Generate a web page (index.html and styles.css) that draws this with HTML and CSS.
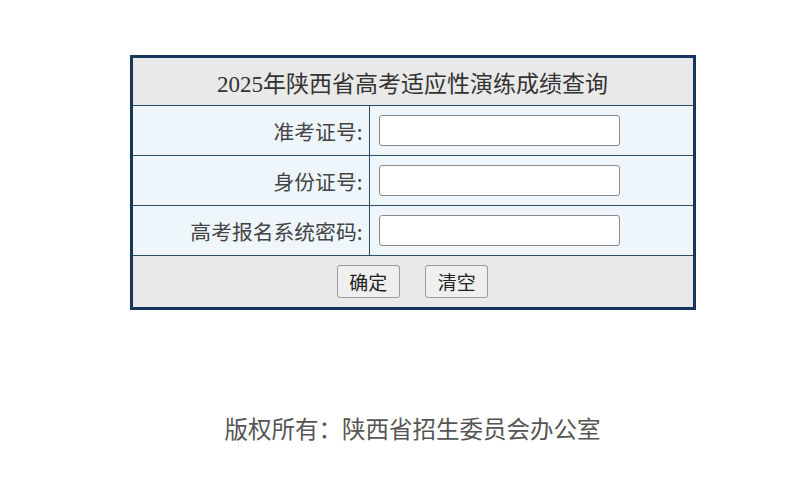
FILE: index.html
```html
<!DOCTYPE html>
<html lang="zh-CN">
<head>
    <meta charset="UTF-8">
    <title>2025年陕西省高考适应性演练成绩查询</title>
    <link rel="stylesheet" href="styles.css">
</head>
<body>
<div class="page">
    <form class="query-form" onsubmit="return false;">
        <table class="query-table">
            <tr class="head-row">
                <th colspan="2">2025年陕西省高考适应性演练成绩查询</th>
            </tr>
            <tr>
                <td class="label">准考证号:</td>
                <td class="field"><input type="text" name="ksh"></td>
            </tr>
            <tr>
                <td class="label">身份证号:</td>
                <td class="field"><input type="text" name="sfzh"></td>
            </tr>
            <tr>
                <td class="label">高考报名系统密码:</td>
                <td class="field"><input type="password" name="mm"></td>
            </tr>
            <tr class="btn-row">
                <td colspan="2">
                    <button type="submit">确定</button>
                    <button type="reset">清空</button>
                </td>
            </tr>
        </table>
    </form>

    <div class="footer">版权所有：陕西省招生委员会办公室</div>
</div>
</body>
</html>
```

FILE: styles.css
```css
* {
  box-sizing: border-box;
}

body {
  margin: 0;
  background: #fff;
  font-family: "Noto Sans CJK SC", "Noto Sans", sans-serif;
  color: #333;
}

.page {
  width: 825px;
  padding-top: 55px;
}

.query-table {
  margin: 0 auto;
  width: 566px;
  border-collapse: collapse;
  border: 3px solid #17365d;
}

.query-table th,
.query-table td {
  border: 1px solid #2b4b6b;
  padding: 0;
}

.head-row th {
  height: 49px;
  background: #e9e9e9;
  font-family: "Liberation Serif", "Noto Sans CJK SC", serif;
  font-size: 23px;
  font-weight: normal;
  color: #333;
  text-align: center;
}

.label {
  width: 238px;
  height: 50px;
  padding-right: 6px !important;
  background: #eef6fc;
  text-align: right;
  font-size: 20.8px;
  color: #444;
}

.field {
  background: #eef6fc;
  padding-left: 9px !important;
}

.field input {
  display: block;
  width: 241px;
  height: 31px;
  border: 1px solid #8a8a8a;
  border-radius: 3px;
  background: #fff;
  outline: none;
}

.btn-row td {
  height: 53px;
  background: #e9e9e9;
  text-align: center;
}

.btn-row button {
  width: 63px;
  height: 33px;
  margin: 0 11px;
  border: 1px solid #999;
  border-radius: 3px;
  background: #efefef;
  font-family: "Noto Sans CJK SC", sans-serif;
  font-size: 19px;
  color: #222;
  padding: 0;
  cursor: pointer;
}

.footer {
  margin-top: 101px;
  text-align: center;
  font-size: 23.5px;
  color: #555;
}
```
